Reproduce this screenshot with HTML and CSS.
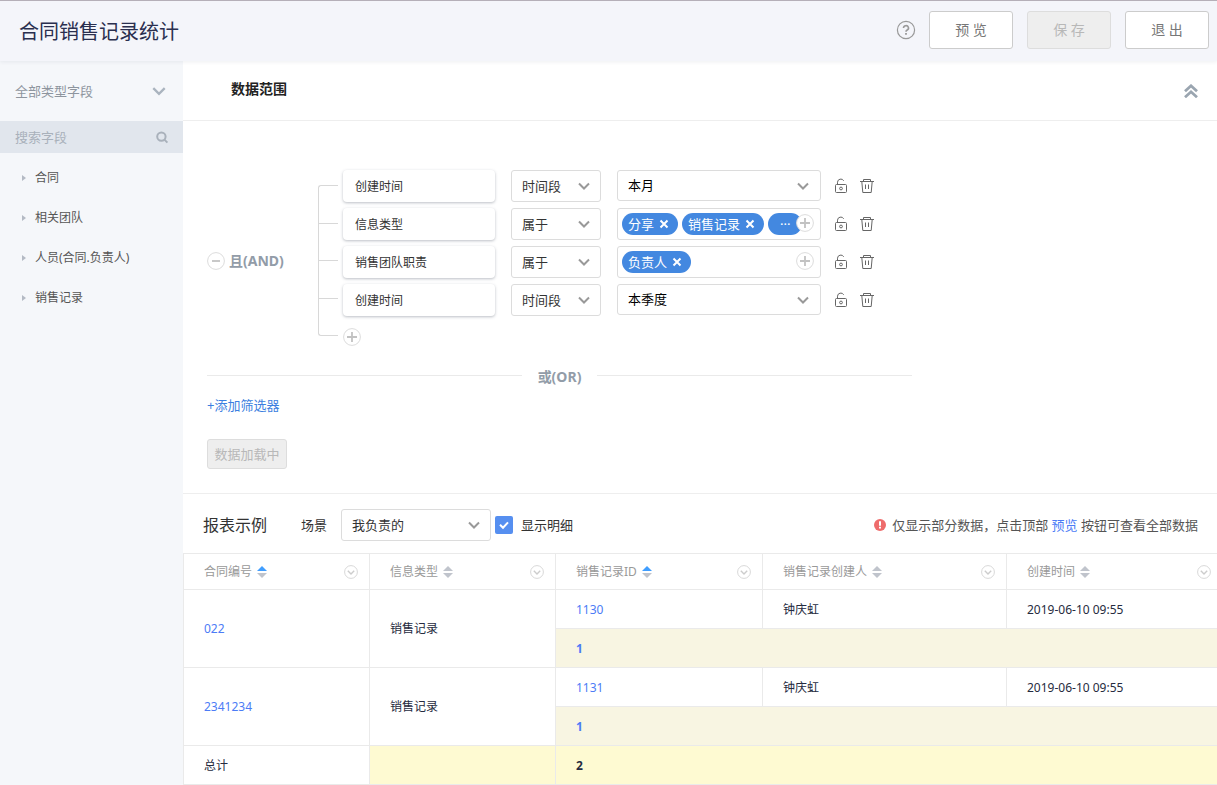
FILE: index.html
```html
<!DOCTYPE html>
<html lang="zh-CN">
<head>
<meta charset="utf-8">
<meta name="viewport" content="width=device-width, initial-scale=1">
<title>合同销售记录统计</title>
<link rel="stylesheet" href="styles.css">
</head>
<body>
<svg class="sprite" aria-hidden="true">
  <symbol id="chevron" viewBox="0 0 14 14"><path d="M2 4.5l5 5 5-5" fill="none" stroke="currentColor" stroke-width="2"/></symbol>
  <symbol id="plus" viewBox="0 0 18 18"><circle cx="9" cy="9" r="8.4" fill="#fff" stroke="#dcdcdc"/><path d="M9 4v10M4 9h10" stroke="#c2c2c2" stroke-width="1.8"/></symbol>
  <symbol id="minus" viewBox="0 0 18 18"><circle cx="9" cy="9" r="8.4" fill="#fff" stroke="#dcdcdc"/><path d="M5 9h8" stroke="#c2c2c2" stroke-width="1.8"/></symbol>
  <symbol id="close" viewBox="0 0 10 10"><path d="M1.5 1.5l7 7M8.5 1.5l-7 7" stroke="#fff" stroke-width="2"/></symbol>
  <symbol id="lock" viewBox="0 0 14 16"><path d="M3.5 7V4.2a3.3 3.3 0 0 1 6.2-1.4" fill="none" stroke="#666"/><rect x="1.5" y="6.5" width="11" height="8" rx="1" fill="none" stroke="#666"/><circle cx="7" cy="10.5" r="1.4" fill="none" stroke="#666"/></symbol>
  <symbol id="trash" viewBox="0 0 14 16"><path d="M0 3.5h14M3.5 3.5v-2h7v2M1.8 3.5l1 11h8.4l1-11M5.5 6.5v4.5M8.5 6.5v4.5" fill="none" stroke="#666"/></symbol>
  <symbol id="menu" viewBox="0 0 14 14"><circle cx="7" cy="7" r="6.4" fill="none" stroke="#d8d8d8"/><path d="M3.8 5.7L7 8.9l3.2-3.2" fill="none" stroke="#ccc" stroke-width="1.4"/></symbol>
  <symbol id="sort" viewBox="0 0 10 12"><path class="sort-up" d="M0 5l5-5 5 5z"/><path d="M0 7l5 5 5-5z" fill="#c0c4cc"/></symbol>
</svg>

<header class="topbar">
  <h1 class="topbar-title">合同销售记录统计</h1>
  <div class="topbar-actions">
    <button class="icon-button" type="button" aria-label="帮助">
      <svg width="20" height="20" viewBox="0 0 20 20" fill="none" stroke="#999"><circle cx="10" cy="10" r="8.6" stroke-width="1.2"/><path d="M7.5 8a2.5 2.3 0 1 1 3.7 2c-.8.5-1.2.8-1.2 1.8" stroke-width="1.6"/><path d="M10 13v1.8" stroke-width="1.8"/></svg>
    </button>
    <button class="button" type="button">预 览</button>
    <button class="button" type="button" disabled>保 存</button>
    <button class="button" type="button">退 出</button>
  </div>
</header>

<div class="workspace">
  <aside class="sidebar">
    <div class="type-picker">
      <select class="type-select" aria-label="字段类型"><option>全部类型字段</option></select>
      <svg class="type-chevron"><use href="#chevron"/></svg>
    </div>
    <div class="search">
      <input class="search-input" type="search" placeholder="搜索字段" aria-label="搜索字段">
      <svg width="14" height="14" viewBox="0 0 14 14" fill="none" stroke="#a9b1bb" stroke-width="2"><circle cx="6.4" cy="6.6" r="4.2"/><path d="M9.4 9.6l3 3"/></svg>
    </div>
    <ul class="fields">
      <li class="field-item">合同</li>
      <li class="field-item">相关团队</li>
      <li class="field-item">人员(合同.负责人)</li>
      <li class="field-item">销售记录</li>
    </ul>
  </aside>

  <main class="main">
    <div class="range-header">
      <h2 class="range-title">数据范围</h2>
      <button class="icon-button" type="button" aria-label="收起">
        <svg width="14" height="14" viewBox="0 0 14 14" fill="none" stroke="#9aa5b0" stroke-width="2.8"><path d="M1 7.2l6-5.4 6 5.4M1 13.2l6-5.4 6 5.4"/></svg>
      </button>
    </div>

    <section class="filters">
      <div class="group">
        <div class="logic">
          <button class="icon-button" type="button" aria-label="收起条件组"><svg class="round"><use href="#minus"/></svg></button>
          <span>且(AND)</span>
        </div>
        <div class="bracket"><i></i><i></i><i></i><i></i></div>
        <div class="conditions">
          <div class="condition">
            <div class="field-box">创建时间</div>
            <div class="select operator"><select aria-label="运算符"><option>时间段</option></select><svg><use href="#chevron"/></svg></div>
            <div class="select value"><select aria-label="值"><option>本月</option></select><svg><use href="#chevron"/></svg></div>
            <div class="tools"><button class="icon-button" type="button" aria-label="锁定"><svg class="tool"><use href="#lock"/></svg></button><button class="icon-button" type="button" aria-label="删除"><svg class="tool"><use href="#trash"/></svg></button></div>
          </div>
          <div class="condition">
            <div class="field-box">信息类型</div>
            <div class="select operator"><select aria-label="运算符"><option>属于</option></select><svg><use href="#chevron"/></svg></div>
            <div class="tags">
              <span class="tag">分享<button class="icon-button" type="button" aria-label="移除分享"><svg class="close"><use href="#close"/></svg></button></span>
              <span class="tag">销售记录<button class="icon-button" type="button" aria-label="移除销售记录"><svg class="close"><use href="#close"/></svg></button></span>
              <span class="tag tag-more">···</span>
              <button class="icon-button tag-add" type="button" aria-label="添加"><svg class="round"><use href="#plus"/></svg></button>
            </div>
            <div class="tools"><button class="icon-button" type="button" aria-label="锁定"><svg class="tool"><use href="#lock"/></svg></button><button class="icon-button" type="button" aria-label="删除"><svg class="tool"><use href="#trash"/></svg></button></div>
          </div>
          <div class="condition">
            <div class="field-box">销售团队职责</div>
            <div class="select operator"><select aria-label="运算符"><option>属于</option></select><svg><use href="#chevron"/></svg></div>
            <div class="tags">
              <span class="tag">负责人<button class="icon-button" type="button" aria-label="移除负责人"><svg class="close"><use href="#close"/></svg></button></span>
              <button class="icon-button tag-add" type="button" aria-label="添加"><svg class="round"><use href="#plus"/></svg></button>
            </div>
            <div class="tools"><button class="icon-button" type="button" aria-label="锁定"><svg class="tool"><use href="#lock"/></svg></button><button class="icon-button" type="button" aria-label="删除"><svg class="tool"><use href="#trash"/></svg></button></div>
          </div>
          <div class="condition">
            <div class="field-box">创建时间</div>
            <div class="select operator"><select aria-label="运算符"><option>时间段</option></select><svg><use href="#chevron"/></svg></div>
            <div class="select value"><select aria-label="值"><option>本季度</option></select><svg><use href="#chevron"/></svg></div>
            <div class="tools"><button class="icon-button" type="button" aria-label="锁定"><svg class="tool"><use href="#lock"/></svg></button><button class="icon-button" type="button" aria-label="删除"><svg class="tool"><use href="#trash"/></svg></button></div>
          </div>
          <button class="icon-button add-condition" type="button" aria-label="添加条件"><svg class="round"><use href="#plus"/></svg></button>
        </div>
      </div>
      <div class="or-divider"><span>或(OR)</span></div>
      <a class="add-filter" href="#">+添加筛选器</a>
      <button class="loading-button" type="button" disabled>数据加载中</button>
    </section>

    <section class="report">
      <div class="report-header">
        <h2 class="report-title">报表示例</h2>
        <label class="scene-label" for="scene">场景</label>
        <div class="select scene"><select id="scene"><option>我负责的</option></select><svg><use href="#chevron"/></svg></div>
        <label class="detail"><input class="detail-box" type="checkbox" checked>显示明细</label>
        <p class="notice">
          <svg width="12" height="12" viewBox="0 0 12 12"><circle cx="6" cy="6" r="6" fill="#ee6b6b"/><path d="M6 2.3v4.4M6 7.8v1.8" stroke="#fff" stroke-width="2"/></svg>
          <span>仅显示部分数据，点击顶部 <a href="#">预览</a> 按钮可查看全部数据</span>
        </p>
      </div>
      <div class="table-clip">
        <table class="table">
          <colgroup><col class="col-key"><col class="col-key"><col class="col-id"><col class="col-owner"><col></colgroup>
          <thead>
            <tr>
              <th scope="col"><div class="head"><span>合同编号</span><svg class="sort sort-active"><use href="#sort"/></svg><svg class="menu"><use href="#menu"/></svg></div></th>
              <th scope="col"><div class="head"><span>信息类型</span><svg class="sort"><use href="#sort"/></svg><svg class="menu"><use href="#menu"/></svg></div></th>
              <th scope="col"><div class="head"><span>销售记录ID</span><svg class="sort sort-active"><use href="#sort"/></svg><svg class="menu"><use href="#menu"/></svg></div></th>
              <th scope="col"><div class="head"><span>销售记录创建人</span><svg class="sort"><use href="#sort"/></svg><svg class="menu"><use href="#menu"/></svg></div></th>
              <th scope="col"><div class="head"><span>创建时间</span><svg class="sort"><use href="#sort"/></svg><svg class="menu"><use href="#menu"/></svg></div></th>
            </tr>
          </thead>
          <tbody>
            <tr><td rowspan="2"><a href="#">022</a></td><td rowspan="2">销售记录</td><td><a href="#">1130</a></td><td>钟庆虹</td><td>2019-06-10 09:55</td></tr>
            <tr><td class="subtotal" colspan="3"><a href="#">1</a></td></tr>
            <tr><td rowspan="2"><a href="#">2341234</a></td><td rowspan="2">销售记录</td><td><a href="#">1131</a></td><td>钟庆虹</td><td>2019-06-10 09:55</td></tr>
            <tr><td class="subtotal" colspan="3"><a href="#">1</a></td></tr>
            <tr><td>总计</td><td class="total"></td><td class="total" colspan="3">2</td></tr>
          </tbody>
        </table>
      </div>
    </section>
  </main>
</div>
</body>
</html>
```
FILE: styles.css
```css
* { box-sizing: border-box; }

body {
  margin: 0;
  min-height: 100vh;
  display: flex;
  flex-direction: column;
  font: 13px/20px "Noto Sans", "Noto Sans CJK SC", sans-serif;
  color: #333;
  background: #fff;
}

h1, h2, p, ul { margin: 0; padding: 0; }
a { color: #4c7cf6; text-decoration: none; }
svg { display: block; flex: none; }
button, input, select { font: inherit; color: inherit; }

.sprite { position: absolute; width: 0; height: 0; }

.icon-button {
  display: block;
  flex: none;
  padding: 0;
  border: 0;
  background: none;
  cursor: pointer;
}

.round { width: 18px; height: 18px; }

/* Top bar */
.topbar {
  position: relative;
  display: flex;
  align-items: center;
  justify-content: space-between;
  height: 61px;
  padding: 0 8px 2px 19px;
  border-top: 1px solid #b5afb8;
  background: #f4f5fa;
  box-shadow: 0 1px 4px rgba(40, 50, 80, 0.08);
}
.topbar-title { padding-top: 4px; font-size: 20px; font-weight: 400; line-height: 28px; color: #2a2f4f; }
.topbar-actions { display: flex; align-items: center; gap: 14px; }
.topbar-actions .icon-button { margin-right: -1px; }
.button {
  min-width: 84px;
  height: 38px;
  padding: 0 25px;
  border: 1px solid #ccc;
  border-radius: 3px;
  background: #fff;
  font-size: 14px;
  color: #777;
}
.button:disabled, .loading-button {
  border: 1px solid #ddd;
  border-radius: 3px;
  background: #eee;
  color: #b8b8b8;
}

.workspace { flex: 1; display: flex; }

/* Sidebar */
.sidebar { flex: none; width: 183px; background: #f5f7fa; }
.type-picker { position: relative; height: 60px; }
.type-select {
  width: 100%;
  height: 60px;
  padding: 0 15px;
  border: 0;
  appearance: none;
  background: none;
  color: #8e959e;
}
.type-chevron {
  position: absolute;
  top: 22px;
  right: 16px;
  width: 16px;
  height: 16px;
  color: #aab4bf;
  pointer-events: none;
}
.search {
  display: flex;
  align-items: center;
  height: 32px;
  padding: 0 14px 0 15px;
  background: #e1e6ed;
}
.search-input {
  flex: 1;
  min-width: 0;
  padding: 0;
  border: 0;
  outline: 0;
  appearance: none;
  background: none;
}
.search-input::placeholder { color: #a9b1bb; }
.fields { padding: 5px 0; list-style: none; font-size: 12px; color: #555; }
.field-item { display: flex; align-items: center; height: 40px; padding-left: 22px; }
.field-item::before {
  content: "";
  margin-right: 9px;
  border: 3px solid transparent;
  border-left: 4px solid #b4bac4;
  border-right: 0;
}

/* Data range */
.main { flex: 1; min-width: 0; }
.range-header {
  display: flex;
  align-items: center;
  justify-content: space-between;
  height: 60px;
  padding: 0 19px 4px 48px;
  border-bottom: 1px solid #eee;
}
.range-title { font-size: 14px; font-weight: 600; color: #222; }
.range-header .icon-button { padding-top: 4px; }

.filters { padding: 49px 24px 24px; border-bottom: 1px solid #eee; }
.group { display: flex; align-items: flex-start; }
.logic {
  align-self: center;
  display: flex;
  align-items: center;
  gap: 4px;
  width: 111px;
  padding-top: 6px;
  font-size: 14px;
  font-weight: 700;
  color: #929ca8;
}
.bracket {
  flex: none;
  display: flex;
  flex-direction: column;
  width: 20px;
  height: 151px;
  margin: 15px 5px 0 0;
  border: 1px solid #d8d8d8;
  border-right: 0;
  border-radius: 3px 0 0 3px;
}
.bracket i { flex: 1; }
.bracket i:not(:last-child) { border-bottom: 1px solid #d8d8d8; }
.conditions { display: flex; flex-direction: column; gap: 6px; }
.condition { display: flex; gap: 16px; height: 32px; }
.field-box {
  width: 152px;
  padding: 0 12px;
  border-radius: 4px;
  background: #fff;
  box-shadow: 0 1px 3px rgba(60, 70, 90, 0.35);
  font-size: 12px;
  line-height: 34px;
}
.select { position: relative; flex: none; height: 32px; }
.select select {
  width: 100%;
  height: 100%;
  padding: 0 10px;
  border: 1px solid #dcdcdc;
  border-radius: 3px;
  appearance: none;
  background: #fff;
}
.select svg {
  position: absolute;
  top: 9px;
  right: 10px;
  width: 14px;
  height: 14px;
  color: #999;
  pointer-events: none;
}
.operator { width: 90px; }
.value { width: 204px; height: 31px; color: #000; }
.value select { padding-bottom: 2px; }
.value svg { right: 11px; }
.tags {
  position: relative;
  display: flex;
  align-items: center;
  gap: 4px;
  width: 204px;
  padding-left: 4px;
  border: 1px solid #dcdcdc;
  border-radius: 3px;
}
.tag {
  display: flex;
  align-items: center;
  gap: 5px;
  height: 22px;
  padding: 0 9px 0 6px;
  border-radius: 11px;
  background: #4388e0;
  color: #fff;
}
.tag-more { padding: 0 12px; }
.tag-add { position: absolute; top: 5px; right: 6px; }
.close { width: 10px; height: 10px; }
.tools { display: flex; align-items: center; gap: 12px; margin-left: -3px; }
.tool { width: 14px; height: 16px; }
.add-condition { align-self: flex-start; margin-top: 6px; }

.or-divider {
  display: flex;
  align-items: center;
  gap: 16px;
  max-width: 705px;
  margin-top: 21px;
  font-size: 14px;
  font-weight: 700;
  color: #929ca8;
}
.or-divider::before, .or-divider::after {
  content: "";
  flex: 1;
  margin-bottom: 3px;
  border-top: 1px solid #eaeaea;
}
.add-filter { display: block; width: fit-content; margin-top: 8px; color: #3d7fe0; }
.loading-button { display: block; width: 80px; height: 30px; margin-top: 24px; padding: 0; }

/* Report preview */
.report-header { display: flex; align-items: center; height: 59px; padding: 2px 19px 0 20px; }
.report-title { margin-right: 34px; font-size: 16px; font-weight: 400; }
.scene-label { margin-right: 14px; }
.scene { width: 150px; margin-right: 4px; }
.detail { display: flex; align-items: center; gap: 8px; }
.detail-box {
  width: 18px;
  height: 18px;
  margin: 0;
  border-radius: 2px;
  appearance: none;
  background: #568ff0 url("data:image/svg+xml,%3Csvg xmlns='http://www.w3.org/2000/svg' viewBox='0 0 18 18'%3E%3Cpath d='M5 8.8l3 3 5-5.4' fill='none' stroke='white' stroke-width='2'/%3E%3C/svg%3E");
}
.detail-box:not(:checked) { background: #fff; border: 1px solid #dcdcdc; }
.notice { display: flex; align-items: center; gap: 6px; margin-left: auto; color: #555; }

/* The last column runs a little past the right edge */
.table-clip { overflow: hidden; }
.table {
  width: calc(100% + 6px);
  table-layout: fixed;
  border-collapse: collapse;
  font-size: 12px;
  color: #262b40;
}
.col-key { width: 186px; }
.col-id { width: 207px; }
.col-owner { width: 244px; }
.table th, .table td {
  height: 39px;
  padding: 1px 11px 0 20px;
  border: 1px solid #eaeaea;
  text-align: left;
  font-weight: 400;
}
.table th { height: 36px; padding-top: 0; color: #999; }
.head { display: flex; align-items: center; gap: 5px; }
.sort { width: 10px; height: 12px; color: #c0c4cc; }
.sort-up { fill: currentColor; }
.sort-active { color: #409eff; }
.menu { width: 14px; height: 14px; margin-left: auto; }
.table .subtotal { background: #f8f5e2; font-weight: 700; }
.table .total { background: #fefad2; font-weight: 700; }
```
